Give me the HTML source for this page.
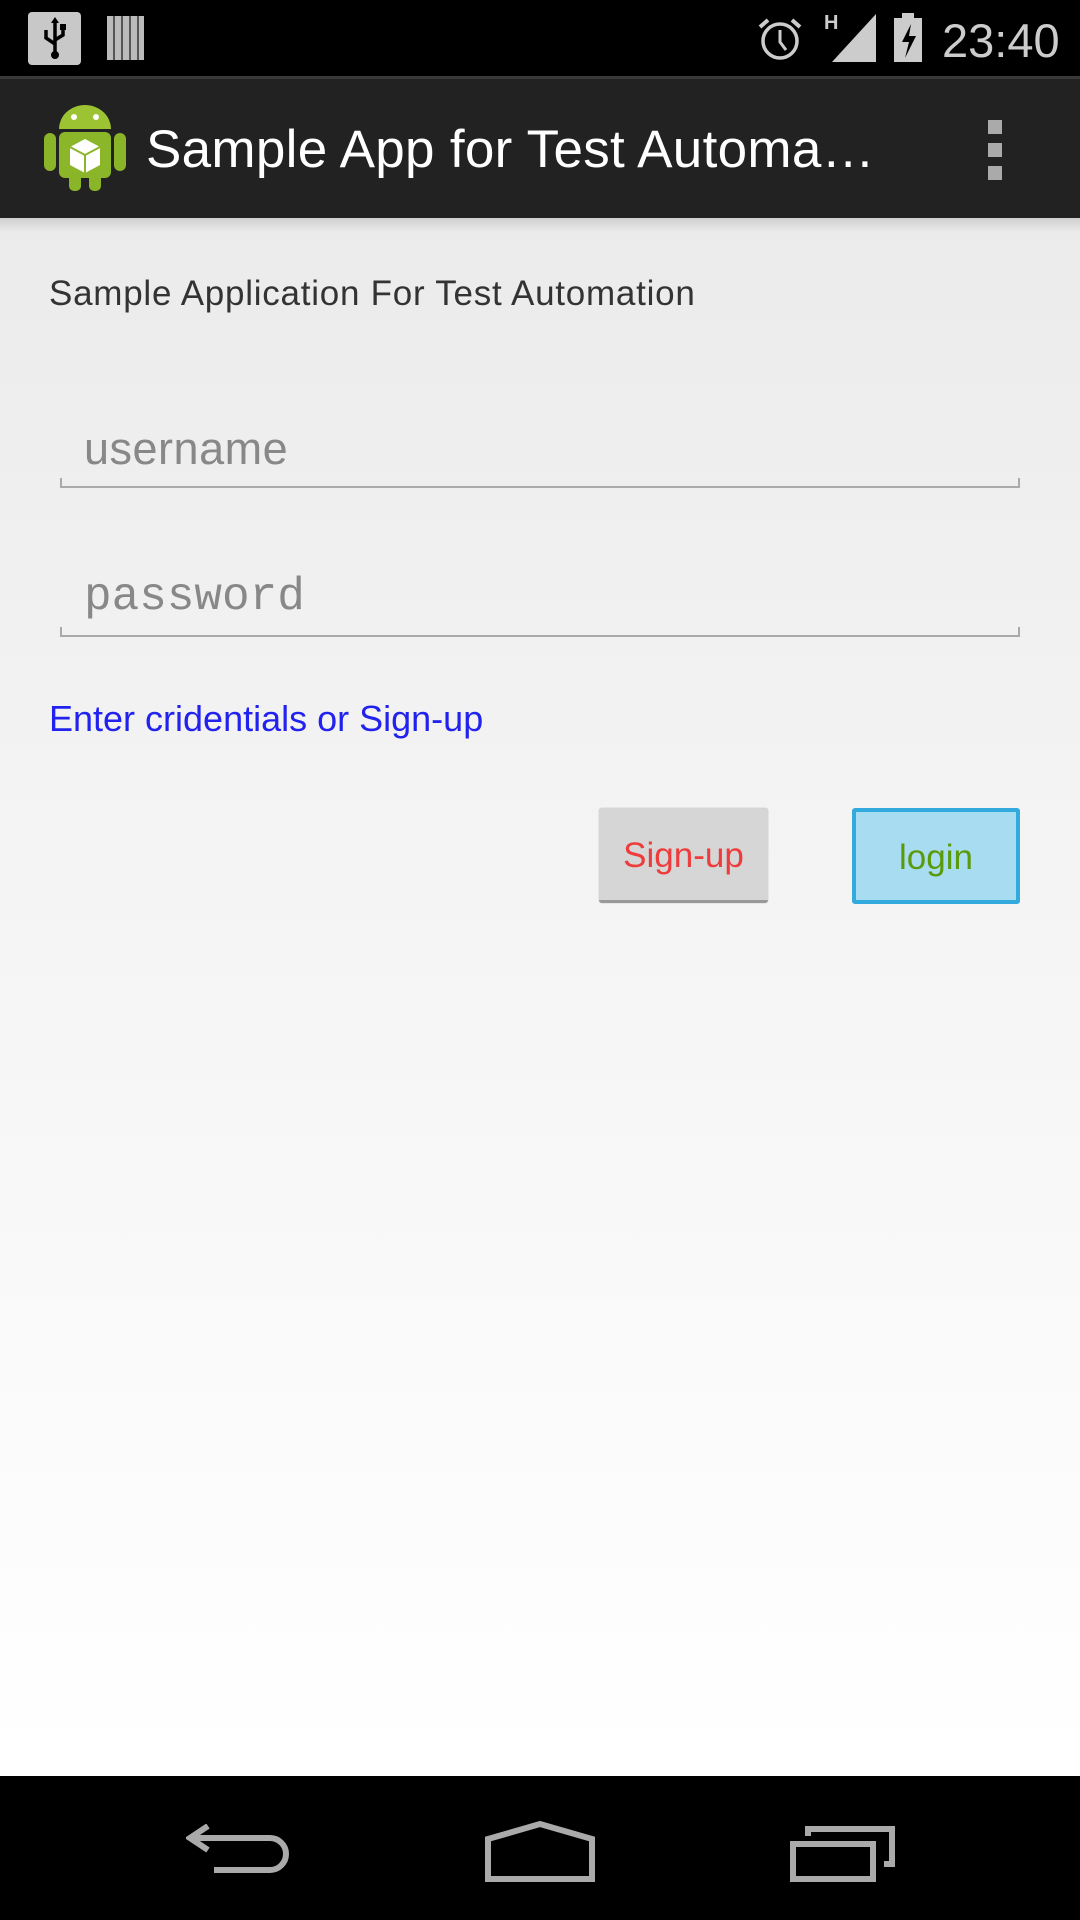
<!DOCTYPE html>
<html><head><meta charset="utf-8"><style>
*{margin:0;padding:0;box-sizing:border-box}
body{width:1080px;height:1920px;position:relative;overflow:hidden;font-family:"Liberation Sans",sans-serif;background:linear-gradient(#ebebeb 218px,#f2f2f2 700px,#ffffff 1760px)}
.abs{position:absolute}
#sb{left:0;top:0;width:1080px;height:76px;background:#000}
#ab{left:0;top:76px;width:1080px;height:142px;background:#222;border-top:3px solid #3a3a3a}
#shadow{left:0;top:218px;width:1080px;height:14px;background:linear-gradient(rgba(0,0,0,.12),rgba(0,0,0,0))}
.t{white-space:nowrap}
.line{height:2px;background:#aaa}
.btn{border-radius:3px;font-size:35px;display:flex;align-items:center;justify-content:center}
#nav{left:0;top:1776px;width:1080px;height:144px;background:#000}
</style></head><body>
<div id="sb" class="abs">
  <div class="abs" style="left:28px;top:12px;width:53px;height:53px;background:#c8c8c8;border-radius:4px"></div>
  <svg class="abs" style="left:28px;top:12px" width="53" height="53" viewBox="0 0 53 53"><path d="M27 8v34M27 32l-9-6v-8M27 28l8-5v-7" stroke="#000" stroke-width="3.5" fill="none"/><circle cx="27" cy="43" r="4" fill="#000"/><rect x="32" y="12" width="6" height="6" fill="#000"/><path d="M27 5l-4 6h8z" fill="#000"/></svg>
  <div class="abs" style="left:107px;top:16px;width:37px;height:44px;background:repeating-linear-gradient(90deg,#bbb 0 6px,#555 6px 8px)"></div>
  <svg class="abs" style="left:755px;top:14px" width="50" height="50" viewBox="0 0 50 50"><circle cx="25" cy="27" r="17" stroke="#ccc" stroke-width="3.5" fill="none"/><path d="M25 16v12l6 8" stroke="#ccc" stroke-width="3" fill="none"/><path d="M5 13l8-7M45 13l-8-7" stroke="#ccc" stroke-width="4"/></svg>
  <div class="abs t" style="left:824px;top:12px;color:#ccc;font-size:20px;font-weight:bold">H</div>
  <svg class="abs" style="left:830px;top:14px" width="48" height="48" viewBox="0 0 48 48"><path d="M46 0V48H2z" fill="#ccc"/></svg>
  <svg class="abs" style="left:892px;top:12px" width="32" height="50" viewBox="0 0 32 50"><rect x="2" y="6" width="28" height="44" fill="#ccc"/><rect x="10" y="1" width="12" height="6" fill="#ccc"/><path d="M19 12l-9 18h7l-4 16 11-22h-7z" fill="#000"/></svg>
  <div class="abs t" style="left:942px;top:13px;color:#ccc;font-size:47px">23:40</div>
</div>
<div id="ab" class="abs">
  <svg class="abs" style="left:44px;top:24px" width="82" height="88" viewBox="0 0 82 88"><rect x="0" y="30" width="12" height="38" rx="6" fill="#8ab528"/><rect x="70" y="30" width="12" height="38" rx="6" fill="#8ab528"/><path d="M15 26a26 24 0 0 1 52 0z" fill="#9cc432"/><rect x="15" y="29" width="52" height="46" rx="6" fill="#8cb62a"/><rect x="25" y="70" width="12" height="18" rx="5" fill="#8ab528"/><rect x="45" y="70" width="12" height="18" rx="5" fill="#8ab528"/><circle cx="30" cy="14" r="3" fill="#fff"/><circle cx="52" cy="14" r="3" fill="#fff"/><path d="M41 36l15 8v18l-15 8-15-8V44z" fill="#fff"/><path d="M41 52v18M26 44l15 8 15-8" stroke="#8cb62a" stroke-width="2" fill="none"/></svg>
  <div class="abs t" style="left:146px;top:40px;color:#fff;font-size:53px;letter-spacing:0.3px">Sample App for Test Automa…</div>
  <div class="abs" style="left:988px;top:41px;width:14px;height:14px;background:#aaa"></div>
  <div class="abs" style="left:988px;top:64px;width:14px;height:14px;background:#aaa"></div>
  <div class="abs" style="left:988px;top:87px;width:14px;height:14px;background:#aaa"></div>
</div>
<div id="shadow" class="abs"></div>
<div class="abs t" style="left:49px;top:274px;color:#333;font-size:35px;letter-spacing:0.75px">Sample Application For Test Automation</div>
<div class="abs t" style="left:84px;top:423px;color:#888;font-size:45px;letter-spacing:0.5px">username</div>
<div class="abs line" style="left:60px;top:486px;width:960px"></div>
<div class="abs" style="left:60px;top:478px;width:2px;height:9px;background:#aaa"></div>
<div class="abs" style="left:1018px;top:478px;width:2px;height:9px;background:#aaa"></div>
<div class="abs t" style="left:84px;top:571px;color:#888;font-size:46px;font-family:'Liberation Mono',monospace">password</div>
<div class="abs line" style="left:60px;top:635px;width:960px"></div>
<div class="abs" style="left:60px;top:627px;width:2px;height:9px;background:#aaa"></div>
<div class="abs" style="left:1018px;top:627px;width:2px;height:9px;background:#aaa"></div>
<div class="abs t" style="left:49px;top:698px;color:#2222ee;font-size:36px">Enter cridentials or Sign-up</div>
<div class="abs btn" style="left:599px;top:808px;width:169px;height:95px;background:#d6d6d6;color:#ee3c3c;border-bottom:3px solid #999;box-shadow:0 0 1px #999;padding-top:4px">Sign-up</div>
<div class="abs btn" style="left:852px;top:808px;width:168px;height:96px;background:#a8dcf0;color:#5a9a0c;border:4px solid #33aadd;padding-top:4px">login</div>
<div id="nav" class="abs">
  <svg class="abs" style="left:186px;top:48px" width="106" height="56" viewBox="0 0 106 56"><path d="M4 14h80a16 16 0 0 1 0 32H28" stroke="#aaa" stroke-width="6" fill="none"/><path d="M22 2L4 14l18 12" stroke="#aaa" stroke-width="6" fill="none"/></svg>
  <svg class="abs" style="left:484px;top:45px" width="112" height="62" viewBox="0 0 112 62"><path d="M4 18L56 3l52 15v40H4z" stroke="#aaa" stroke-width="6" fill="none"/></svg>
  <svg class="abs" style="left:790px;top:48px" width="106" height="58" viewBox="0 0 106 58"><path d="M3 20h80v35H3z" stroke="#aaa" stroke-width="6" fill="none"/><path d="M18 12V5h84v35h-8" stroke="#aaa" stroke-width="6" fill="none"/></svg>
</div>
</body></html>
